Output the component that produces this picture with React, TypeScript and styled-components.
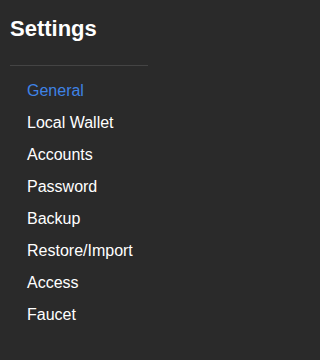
import styled, { createGlobalStyle } from 'styled-components';

const GlobalStyle = createGlobalStyle`
    html, body {
        margin: 0;
        padding: 0;
        background: #2a2a2a;
    }
    body {
        font-family: "Liberation Sans", Arial, sans-serif;
    }
`

const Sidebar = styled.nav`
    width: 211px;
    height: 360px;
    box-sizing: border-box;
    padding: 16px 0 0 10px;
    background: #2a2a2a;
`

const Title = styled.h1`
    margin: 0;
    font-size: 22px;
    font-weight: bold;
    color: #ffffff;
`

const Divider = styled.hr`
    width: 138px;
    margin: 23px 0 9px 0;
    border: none;
    border-top: 1px solid #444444;
    height: 0;
`

const MenuList = styled.ul`
    list-style: none;
    margin: 0;
    padding: 0;
`

const MenuItem = styled.li<{ active?: boolean }>`
    padding: 7px 0 7px 17px;
    font-size: 16px;
    line-height: 18px;
    color: ${({ active }) => active ? "#3f83e6" : "#ffffff"};
    cursor: pointer;
`

const items = [
    "General",
    "Local Wallet",
    "Accounts",
    "Password",
    "Backup",
    "Restore/Import",
    "Access",
    "Faucet",
]

function App() {
    return (
        <>
            <GlobalStyle />
            <Sidebar>
                <Title>Settings</Title>
                <Divider />
                <MenuList>
                    {items.map((label, i) => (
                        <MenuItem key={label} active={i === 0}>{label}</MenuItem>
                    ))}
                </MenuList>
            </Sidebar>
        </>
    )
}

export default App;
